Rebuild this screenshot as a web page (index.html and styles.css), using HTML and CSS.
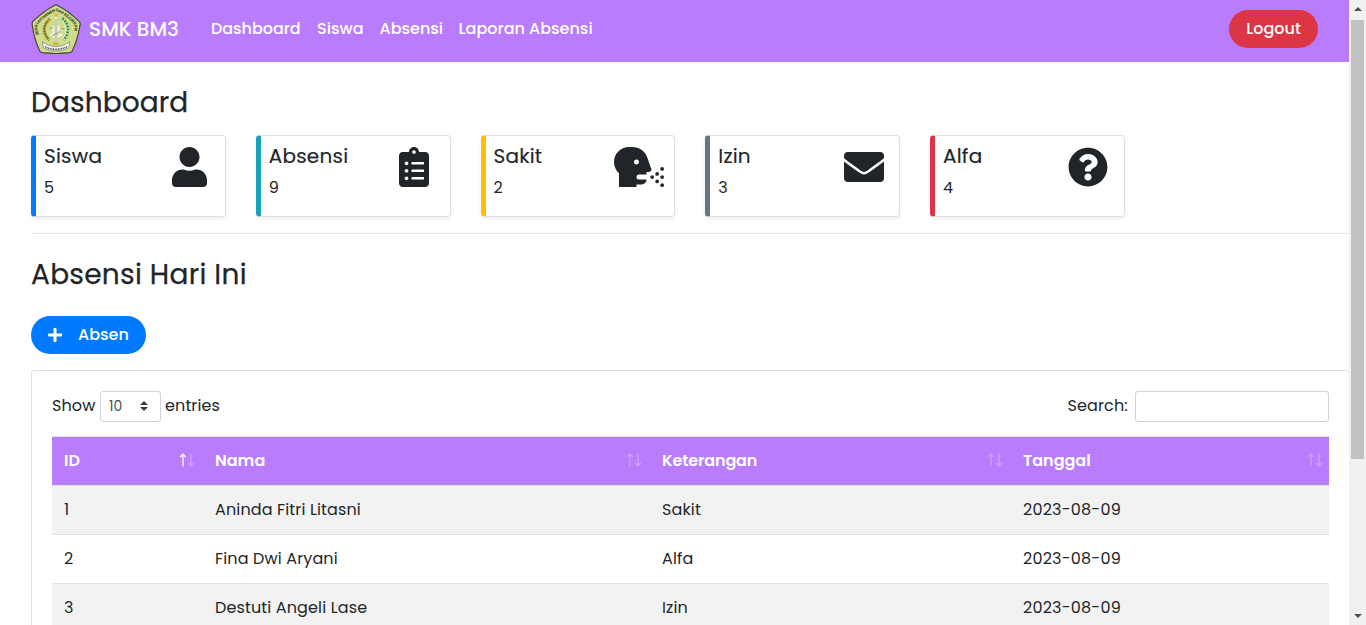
FILE: index.html
```html
<!DOCTYPE html>
<html lang="id">
<head>
<meta charset="utf-8">
<title>SMK BM3</title>
<link rel="stylesheet" href="styles.css">
</head>
<body>
<div class="window">
<div class="page">
  <nav class="navbar">
    <svg class="logo" viewBox="0 0 150 150">
      <path d="M75 2 Q112 20 145 53 Q149 58 147 64 Q141 104 124 140 Q122 145 116 146 Q75 151 34 146 Q28 145 26 140 Q9 104 4 64 Q2 58 5 53 Q38 20 75 2Z" fill="#cfdc8c" stroke="#48483c" stroke-width="3.5"/>
      <path id="arc" d="M24 92 Q15 68 22 59 Q45 34 75 21 Q105 34 128 59 Q135 68 126 92" fill="none"/>
      <text class="logo-text"><textPath href="#arc" textLength="188">SEKOLAH MENENGAH KEJURUAN</textPath></text>
      <path d="M57 45 Q22 75 55 109" fill="none" stroke="#9a8d20" stroke-width="9" stroke-dasharray="6 2"/>
      <path d="M49 50 Q31 76 51 103" fill="none" stroke="#62601f" stroke-width="2.5"/>
      <path d="M94 43 Q126 71 98 108" fill="none" stroke="#259064" stroke-width="8" stroke-dasharray="5 4"/>
      <path d="M95 51 Q114 75 96 104" fill="none" stroke="#edf2cf" stroke-width="3"/>
      <path d="M75 38V116M67 65V92M83 65V92M57 91Q75 108 94 91" fill="none" stroke="#f1f2e4" stroke-width="6"/>
      <path d="M75 45V113M63 96L88 82M55 72h10M92 74h8" fill="none" stroke="#77765f" stroke-width="2"/>
      <circle cx="75" cy="33" r="5" fill="#e0b920"/>
      <path d="M67 115h16v9H67z" fill="#c7b545"/>
      <path d="M34 113 L46 121 Q75 135 104 121 L116 113 L113 132 Q75 150 37 132Z" fill="#f4f4f0" stroke="#777" stroke-width="2"/>
      <path d="M42 128 Q75 144 108 128" fill="none" stroke="#555" stroke-width="5" stroke-dasharray="3 2"/>
    </svg>
    <span class="brand">SMK BM3</span>
    <div class="links">
      <a>Dashboard</a><a>Siswa</a><a>Absensi</a><a>Laporan Absensi</a>
    </div>
    <button class="logout">Logout</button>
  </nav>
  <main class="content">
    <h1 class="title t-dash">Dashboard</h1>
    <section class="cards">
      <div class="stat blue"><div><h2>Siswa</h2><p>5</p></div>
        <div class="ico"><svg viewBox="0 0 448 512"><path d="M224 256c70.7 0 128-57.3 128-128S294.7 0 224 0 96 57.3 96 128s57.3 128 128 128zm89.6 32h-16.7c-22.2 10.2-46.9 16-72.9 16s-50.6-5.8-72.9-16h-16.7C60.2 288 0 348.2 0 422.4V464c0 26.5 21.5 48 48 48h352c26.5 0 48-21.5 48-48v-41.6c0-74.2-60.2-134.4-134.4-134.4z"/></svg></div></div>
      <div class="stat teal"><div><h2>Absensi</h2><p>9</p></div>
        <div class="ico"><svg viewBox="0 0 384 512"><path d="M336 64h-80c0-35.3-28.7-64-64-64s-64 28.7-64 64H48C21.5 64 0 85.5 0 112v352c0 26.5 21.5 48 48 48h288c26.5 0 48-21.5 48-48V112c0-26.5-21.5-48-48-48zM96 424c-13.3 0-24-10.7-24-24s10.7-24 24-24 24 10.7 24 24-10.7 24-24 24zm0-96c-13.3 0-24-10.7-24-24s10.7-24 24-24 24 10.7 24 24-10.7 24-24 24zm0-96c-13.3 0-24-10.7-24-24s10.7-24 24-24 24 10.7 24 24-10.7 24-24 24zm96-192c13.3 0 24 10.7 24 24s-10.7 24-24 24-24-10.7-24-24 10.7-24 24-24zm128 368c0 4.4-3.6 8-8 8H168c-4.4 0-8-3.6-8-8v-16c0-4.4 3.6-8 8-8h144c4.4 0 8 3.6 8 8v16zm0-96c0 4.4-3.6 8-8 8H168c-4.4 0-8-3.6-8-8v-16c0-4.4 3.6-8 8-8h144c4.4 0 8 3.6 8 8v16zm0-96c0 4.4-3.6 8-8 8H168c-4.4 0-8-3.6-8-8v-16c0-4.4 3.6-8 8-8h144c4.4 0 8 3.6 8 8v16z"/></svg></div></div>
      <div class="stat yellow"><div><h2>Sakit</h2><p>2</p></div>
        <div class="ico"><svg viewBox="0 0 640 512"><path d="M616 304a24 24 0 1 0-24-24 24 24 0 0 0 24 24zM552 416a24 24 0 1 0 24 24 24 24 0 0 0-24-24zm-64-56a24 24 0 1 0 24 24 24 24 0 0 0-24-24zM616 464a24 24 0 1 0 24 24 24 24 0 0 0-24-24zm0-104a24 24 0 1 0 24 24 24 24 0 0 0-24-24zm-64-40a24 24 0 1 0 24 24 24 24 0 0 0-24-24zm-74.78-45c-21-47.12-48.5-151.75-73.12-186.75A208.13 208.13 0 0 0 234.1 0H192C86 0 0 86 0 192c0 56.75 24.75 107.62 64 142.88V512h224v-32h64a64 64 0 0 0 64-64H320a32 32 0 0 1 0-64h96v-32h32a32 32 0 0 0 29.22-45zM288 224a32 32 0 1 1 32-32 32.07 32.07 0 0 1-32 32z"/></svg></div></div>
      <div class="stat gray"><div><h2>Izin</h2><p>3</p></div>
        <div class="ico"><svg viewBox="0 0 512 512"><path d="M502.3 190.8c3.9-3.1 9.7-.2 9.7 4.7V400c0 26.5-21.5 48-48 48H48c-26.5 0-48-21.5-48-48V195.6c0-5 5.7-7.8 9.7-4.7 22.4 17.4 52.1 39.5 154.1 113.6 21.1 15.4 56.7 47.8 92.2 47.6 35.7.3 72-32.8 92.3-47.6 102-74.1 131.6-96.3 154-113.7zM256 320c23.2.4 56.6-29.2 73.4-41.4 132.7-96.3 142.8-104.7 173.4-128.7 5.8-4.5 9.2-11.5 9.2-18.9v-19c0-26.5-21.5-48-48-48H48c-26.5 0-48 21.5-48 48v19c0 7.4 3.4 14.3 9.2 18.9 30.6 23.9 40.7 32.4 173.4 128.7 16.8 12.2 50.2 41.8 73.4 41.4z"/></svg></div></div>
      <div class="stat red"><div><h2>Alfa</h2><p>4</p></div>
        <div class="ico"><svg viewBox="0 0 512 512"><path d="M504 256c0 136.997-111.043 248-248 248S8 392.997 8 256C8 119.083 119.043 8 256 8s248 111.083 248 248zM262.655 90c-54.497 0-89.255 22.957-116.549 63.758-3.536 5.286-2.353 12.415 2.715 16.258l34.699 26.31c5.205 3.947 12.621 3.008 16.665-2.122 17.864-22.658 30.113-35.797 57.303-35.797 20.429 0 45.698 13.148 45.698 32.958 0 14.976-12.363 22.667-32.534 33.976C247.128 238.528 216 254.941 216 296v4c0 6.627 5.373 12 12 12h56c6.627 0 12-5.373 12-12v-1.333c0-28.462 83.186-29.647 83.186-106.667 0-58.002-60.165-102-116.531-102zM256 338c-25.365 0-46 20.635-46 46 0 25.364 20.635 46 46 46s46-20.636 46-46c0-25.365-20.635-46-46-46z"/></svg></div></div>
    </section>
    <hr class="rule">
    <h1 class="title t-today">Absensi Hari Ini</h1>
    <button class="add"><svg viewBox="0 0 448 512"><path d="M416 208H272V64c0-17.67-14.33-32-32-32h-32c-17.67 0-32 14.33-32 32v144H32c-17.67 0-32 14.33-32 32v32c0 17.67 14.33 32 32 32h144v144c0 17.67 14.33 32 32 32h32c17.67 0 32-14.33 32-32V304h144c17.67 0 32-14.33 32-32v-32c0-17.67-14.33-32-32-32z"/></svg><span>Absen</span></button>
    <section class="panel">
      <div class="tools">
        <span class="show">Show</span>
        <span class="select"><span>10</span><svg viewBox="0 0 8 10"><path d="M4 0L8 4H0zM4 10L0 6H8z"/></svg></span>
        <span class="entries">entries</span>
        <span class="search-label">Search:</span><input class="search">
      </div>
      <table class="table">
        <colgroup><col class="c1"><col class="c2"><col class="c3"><col class="c4"></colgroup>
        <thead><tr>
          <th><div class="th"><span>ID</span><svg class="sort asc" viewBox="0 0 16 14"><path class="up" d="M4 13.5V1.5M1.2 4L4 1.2L6.8 4"/><path d="M12 .5V12.5M9.2 10L12 12.8L14.8 10"/></svg></div></th>
          <th><div class="th"><span>Nama</span><svg class="sort" viewBox="0 0 16 14"><path d="M4 13.5V1.5M1.2 4L4 1.2L6.8 4"/><path d="M12 .5V12.5M9.2 10L12 12.8L14.8 10"/></svg></div></th>
          <th><div class="th"><span class="tight">Keterangan</span><svg class="sort" viewBox="0 0 16 14"><path d="M4 13.5V1.5M1.2 4L4 1.2L6.8 4"/><path d="M12 .5V12.5M9.2 10L12 12.8L14.8 10"/></svg></div></th>
          <th><div class="th last"><span>Tanggal</span><svg class="sort" viewBox="0 0 16 14"><path d="M4 13.5V1.5M1.2 4L4 1.2L6.8 4"/><path d="M12 .5V12.5M9.2 10L12 12.8L14.8 10"/></svg></div></th>
        </tr></thead>
        <tbody>
          <tr><td>1</td><td>Aninda Fitri Litasni</td><td>Sakit</td><td class="date">2023-08-09</td></tr>
          <tr><td>2</td><td>Fina Dwi Aryani</td><td>Alfa</td><td class="date">2023-08-09</td></tr>
          <tr><td>3</td><td>Destuti Angeli Lase</td><td>Izin</td><td class="date">2023-08-09</td></tr>
        </tbody>
      </table>
    </section>
  </main>
</div>
<div class="scrollbar"><i class="tri-up"></i><i class="thumb"></i><i class="tri-down"></i></div>
</div>
</body>
</html>
```
FILE: styles.css
```css
* { box-sizing: border-box; }
body { margin: 0; overflow: hidden; background: #fff; color: #212529; font: 400 16px/24px Poppins, Inter, sans-serif; }
.window { display: flex; height: 625px; overflow: hidden; }
.page { width: 1349px; flex: none; overflow: hidden; }
.navbar { height: 62px; background: #b97cfc; display: flex; align-items: flex-start; padding: 4px 31px 0; color: #fff; font-weight: 500; white-space: nowrap; }
.logo { width: 50px; height: 50px; flex: none; }
.logo-text { font-size: 12px; font-weight: 700; fill: #44441f; }
.brand { width: 122px; margin-left: 8px; padding-top: 10px; font-size: 20px; line-height: 30px; letter-spacing: .05px; }
.links { display: flex; gap: 16px; padding-top: 13px; }
.links a:nth-child(1) { width: 90px; letter-spacing: -.05px; }
.links a:nth-child(2) { width: 46.5px; }
.links a:nth-child(3) { width: 63px; }
.logout { margin: 6px 0 0 auto; width: 89px; height: 38px; border: 0; border-radius: 19px; background: #dc3545; color: #fff; font: inherit; padding: 0; }
.content { padding: 24px 0 0 31px; }
.title { margin: 0; font-weight: 400; font-size: 28px; line-height: 34px; -webkit-text-stroke: .25px #212529; }
.t-dash { letter-spacing: .1px; }
.cards { display: flex; gap: 30px; margin-top: 15px; }
.stat { width: 194.75px; height: 82px; border: 1px solid #dfdfdf; border-left: 5px solid; border-radius: 4px; box-shadow: 0 2px 4px rgba(0,0,0,.075); padding: 8px 10.5px 0 8px; display: flex; justify-content: space-between; }
.stat h2 { margin: 0 0 8px; font-weight: 400; font-size: 20px; line-height: 24px; letter-spacing: .22px; -webkit-text-stroke: .15px #212529; }
.stat p { margin: 0; }
.blue { border-left-color: #007bff; }
.teal { border-left-color: #17a2b8; }
.yellow { border-left-color: #ffc107; }
.gray { border-left-color: #6c757d; }
.red { border-left-color: #dc3545; }
.ico { width: 50px; padding-top: 3px; display: flex; justify-content: center; }
.ico svg { height: 40px; fill: #212529; }
.rule { margin: 16px 0 0; border: 0; border-top: 1px solid #e5e5e5; }
.t-today { margin-top: 24px; letter-spacing: .27px; }
.add { margin-top: 24px; width: 115px; height: 38px; border: 0; border-radius: 19px; background: #007bff; color: #fff; font: inherit; font-weight: 500; padding: 0 0 0 17px; display: flex; align-items: center; gap: 16px; }
.add svg { width: 14px; height: 16px; fill: #fff; }
.panel { width: 1319px; height: 500px; margin-top: 16px; border: 1px solid #dfdfdf; border-radius: 4px; padding: 20px; }
.tools { display: flex; align-items: center; height: 31px; letter-spacing: .12px; }
.show, .entries, .search-label { padding-bottom: 2px; }
.show { width: 44px; }
.select { width: 61px; height: 31px; margin: 0 4px; border: 1px solid #ced4da; border-radius: 3px; display: flex; align-items: center; justify-content: space-between; padding: 0 12px 2px 8px; font-size: 14px; letter-spacing: 0; color: #495057; }
.select svg { width: 8px; height: 10px; fill: #343a40; }
.search-label { margin-left: auto; width: 60.5px; }
.search { width: 194px; height: 31px; margin: 0 0 0 7px; border: 1px solid #ced4da; border-radius: 3px; padding: 0; }
.table { width: 1277px; margin-top: 14px; border-collapse: separate; border-spacing: 0; table-layout: fixed; white-space: nowrap; }
.c1 { width: 151px; } .c2 { width: 447px; } .c3 { width: 361px; } .c4 { width: 318px; }
.table th, .table td { height: 49px; padding: 0 0 0 12px; border-top: 1px solid #dee2e6; text-align: left; letter-spacing: .14px; }
.table th { background: #b97cfc; background-clip: padding-box; color: #fff; font-weight: 600; letter-spacing: 0; }
.table .date { letter-spacing: .22px; }
.tight { letter-spacing: -.15px; }
.table tbody tr:nth-child(odd) td { background: #f2f2f2; background-clip: padding-box; }
.th { display: flex; justify-content: space-between; align-items: center; padding-right: 8px; }
.th.last { padding-right: 6px; }
.sort { width: 16px; height: 14px; margin-top: -2px; fill: none; stroke: #fff; stroke-width: 1.3; }
.sort path { opacity: .3; }
.asc .up { opacity: 1; }
.scrollbar { width: 17px; background: #f1f1f1; display: flex; flex-direction: column; align-items: center; padding: 7px 0 7px; }
.tri-up { border: 4px solid transparent; border-top: 0; border-bottom-color: #505050; }
.thumb { width: 13px; height: 439px; margin-top: 9px; background: #c1c1c1; }
.tri-down { margin-top: auto; border: 4px solid transparent; border-bottom: 0; border-top-color: #505050; }
```
